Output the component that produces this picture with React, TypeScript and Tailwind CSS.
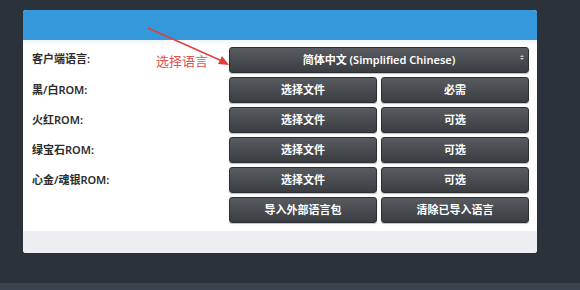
const font = { fontFamily: '"Noto Sans", "Noto Sans CJK SC", sans-serif' };

function DarkButton({ children }: { children: React.ReactNode }) {
  return (
    <button className="h-[26px] w-full rounded-[3px] border border-[#2c2f33] bg-gradient-to-b from-[#585b60] to-[#3a3d42] text-[11px] font-semibold text-white shadow-[0_1px_1px_rgba(0,0,0,0.25)]">
      {children}
    </button>
  );
}

export default function App() {
  const rows = [
    { label: "黑/白ROM:", left: "选择文件", right: "必需" },
    { label: "火红ROM:", left: "选择文件", right: "可选" },
    { label: "绿宝石ROM:", left: "选择文件", right: "可选" },
    { label: "心金/魂银ROM:", left: "选择文件", right: "可选" },
  ];

  return (
    <div className="relative flex h-[290px] w-[580px] flex-col bg-[#2b323c]" style={font}>
      <div className="ml-[23px] mt-[10px] w-[514px] overflow-hidden rounded-[3px] bg-white">
        <div className="h-[30px] bg-[#3498db]" />
        <div className="bg-gradient-to-b from-[#f1f6fa] to-white to-[6px] pb-2 pl-[9px] pr-2 pt-[6px]">
          <div className="grid grid-cols-[197px_1fr] gap-y-1">
            <div className="flex items-center text-[11px] font-semibold text-[#2d2d2d]">客户端语言:</div>
            <div className="relative">
              <DarkButton>简体中文 (Simplified Chinese)</DarkButton>
              <span className="absolute right-[5px] top-[9px] flex flex-col gap-[1px]">
                <span className="h-0 w-0 border-x-[2px] border-b-[2px] border-x-transparent border-b-[#c8c8c8]" />
                <span className="h-0 w-0 border-x-[2px] border-t-[2px] border-x-transparent border-t-[#c8c8c8]" />
              </span>
            </div>
            {rows.map((r) => (
              <div key={r.label} className="contents">
                <div className="flex items-center text-[11px] font-semibold text-[#2d2d2d]">{r.label}</div>
                <div className="grid grid-cols-2 gap-1">
                  <DarkButton>{r.left}</DarkButton>
                  <DarkButton>{r.right}</DarkButton>
                </div>
              </div>
            ))}
            <div />
            <div className="grid grid-cols-2 gap-1">
              <DarkButton>导入外部语言包</DarkButton>
              <DarkButton>清除已导入语言</DarkButton>
            </div>
          </div>
        </div>
        <div className="h-[22px] bg-[#eceef1]" />
      </div>
      <div className="mt-auto h-[7px] bg-[#3a434e]" />

      <span className="absolute left-[156px] top-[51px] text-[13px] text-[#e0524f]" style={{ fontFamily: '"Noto Sans CJK SC", sans-serif' }}>
        选择语言
      </span>
      <svg className="absolute left-0 top-0" width="580" height="290" viewBox="0 0 580 290">
        <line x1="148" y1="28" x2="222" y2="61" stroke="#e0403c" strokeWidth="1.5" />
        <polygon points="229,65 218,64 222,56" fill="#e0403c" />
      </svg>
    </div>
  );
}
